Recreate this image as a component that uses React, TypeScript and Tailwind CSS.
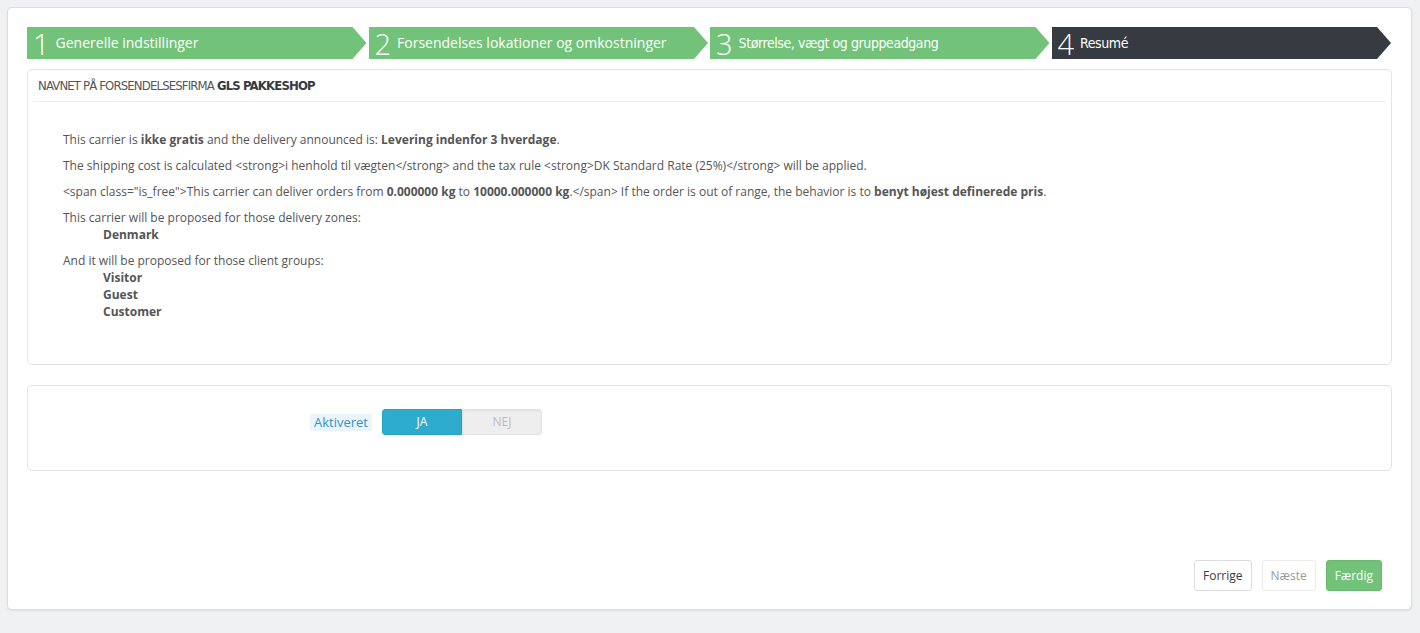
const STEPS = [
  { n: "1", label: "Generelle indstillinger", done: true, condensed: false },
  { n: "2", label: "Forsendelses lokationer og omkostninger", done: true, condensed: false },
  { n: "3", label: "Størrelse, vægt og gruppeadgang", done: true, condensed: true },
  { n: "4", label: "Resumé", done: false, condensed: true },
];

function Step({ n, label, done, condensed }: { n: string; label: string; done: boolean; condensed: boolean }) {
  return (
    <div
      className={`flex-1 h-[32px] flex items-center pl-[6px] text-white [clip-path:polygon(0_0,calc(100%-14px)_0,100%_50%,calc(100%-14px)_100%,0_100%)] ${
        done ? "bg-[#72c279]" : "bg-[#363a41]"
      }`}
    >
      <span className="text-[29px] font-light leading-none mr-[6px] font-['Open_Sans',sans-serif]">{n}</span>
      <span
        className={`text-[14px] leading-none ${
          condensed
            ? "font-['DejaVu_Sans_Condensed','Liberation_Sans_Narrow',sans-serif] tracking-[-0.03em] text-[13.5px]"
            : "font-['Open_Sans',sans-serif]"
        }`}
      >
        {label}
      </span>
    </div>
  );
}

export default function App() {
  return (
    <div className="min-h-[633px] bg-[#eff1f2] pt-[7px] pl-[7px] pr-[8px] font-['Open_Sans',sans-serif] text-[#555]">
      <div className="bg-white border border-[#dcdfe2] rounded-[5px] shadow-[0_1px_2px_rgba(0,0,0,0.08)] h-[603px] px-[19px] pt-[19px] flex flex-col">
        {/* Steps */}
        <div className="flex gap-[2px] pr-[1px]">
          {STEPS.map((s) => (
            <Step key={s.n} {...s} />
          ))}
        </div>

        {/* Summary */}
        <div className="mt-[10px] border border-[#e1e3e5] rounded-[5px] px-[5px] pb-[44px]">
          <div className="border-b border-[#eee] h-[32px] flex items-center px-[5px] pt-[1px] font-['DejaVu_Sans_Condensed','Liberation_Sans_Narrow',sans-serif] text-[13px] uppercase tracking-[-0.065em] text-[#555]">
            Navnet på forsendelsesfirma&nbsp;<b className="font-bold text-[#363a41]">GLS Pakkeshop</b>
          </div>
          <div className="pl-[30px] pt-[29px] text-[12px] leading-[17px]">
            <p className="mb-[9px]">
              This carrier is <b>ikke gratis</b> and the delivery announced is: <b>Levering indenfor 3 hverdage</b>.
            </p>
            <p className="mb-[9px]">
              The shipping cost is calculated &lt;strong&gt;i henhold til vægten&lt;/strong&gt; and the tax rule &lt;strong&gt;DK Standard Rate (25%)&lt;/strong&gt; will be applied.
            </p>
            <p className="mb-[9px]">
              &lt;span class="is_free"&gt;This carrier can deliver orders from <b>0.000000 kg</b> to <b>10000.000000 kg</b>.&lt;/span&gt; If the order is out of range, the behavior is to <b>benyt højest definerede pris</b>.
            </p>
            <p>This carrier will be proposed for those delivery zones:</p>
            <ul className="pl-[40px] mb-[9px] font-bold">
              <li>Denmark</li>
            </ul>
            <p>And it will be proposed for those client groups:</p>
            <ul className="pl-[40px] font-bold">
              <li>Visitor</li>
              <li>Guest</li>
              <li>Customer</li>
            </ul>
          </div>
        </div>

        {/* Active toggle */}
        <div className="mt-[20px] border border-[#e1e3e5] rounded-[5px] h-[86px] flex items-start pt-[23px]">
          <div className="w-[354px] h-[26px] flex items-center justify-end pr-[10px]">
            <span className="bg-[#eaf5fb] text-[#3a8fc0] text-[13px] leading-[17px] px-[4px] rounded-[2px]">Aktiveret</span>
          </div>
          <div className="flex w-[160px] h-[26px] rounded-[3px] overflow-hidden text-[12px]">
            <span className="flex-1 bg-[#2eacce] text-white flex items-center justify-center border border-[#2aa0c0] rounded-l-[3px]">JA</span>
            <span className="flex-1 bg-[#eee] text-[#bbb] flex items-center justify-center border border-[#e3e3e3] rounded-r-[3px] shadow-[inset_0_1px_2px_rgba(0,0,0,0.06)]">NEJ</span>
          </div>
        </div>

        {/* Footer */}
        <div className="mt-auto mb-[18px] flex justify-end gap-[10px] pr-[10px] text-[12px]">
          <button className="h-[31px] px-[8px] border border-[#dcdcdc] rounded-[3px] bg-white text-[#363a41]">Forrige</button>
          <button className="h-[31px] px-[8px] border border-[#eaeaea] rounded-[3px] bg-white text-[#999]">Næste</button>
          <button className="h-[31px] px-[8px] border border-[#6ab96f] rounded-[3px] bg-[#72c279] text-white">Færdig</button>
        </div>
      </div>
    </div>
  );
}
